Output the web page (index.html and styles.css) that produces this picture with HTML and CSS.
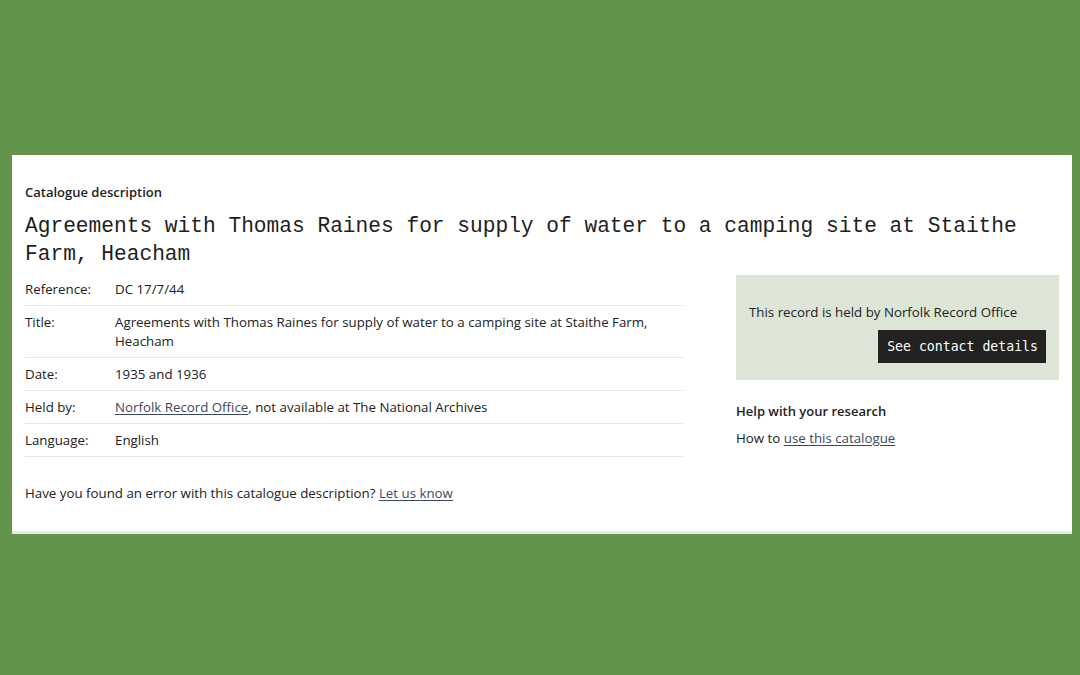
FILE: index.html
```html
<!DOCTYPE html>
<html lang="en">
<head>
<meta charset="utf-8">
<title>Catalogue description</title>
<link rel="stylesheet" href="styles.css">
</head>
<body>
<main class="card">
  <p class="eyebrow">Catalogue description</p>
  <h1 class="title">Agreements with Thomas Raines for supply of water to a camping site at Staithe Farm, Heacham</h1>
  <div class="layout">
    <section class="details">
      <dl class="table">
        <div class="row"><dt>Reference:</dt><dd>DC 17/7/44</dd></div>
        <div class="row"><dt>Title:</dt><dd>Agreements with Thomas Raines for supply of water to a camping site at Staithe Farm, Heacham</dd></div>
        <div class="row"><dt>Date:</dt><dd>1935 and 1936</dd></div>
        <div class="row"><dt>Held by:</dt><dd><a href="#">Norfolk Record Office</a>, not available at The National Archives</dd></div>
        <div class="row"><dt>Language:</dt><dd>English</dd></div>
      </dl>
      <p class="error-note">Have you found an error with this catalogue description? <a href="#">Let us know</a></p>
    </section>
    <aside class="side">
      <div class="held-box">
        <p class="held-text">This record is held by Norfolk Record Office</p>
        <div class="btn-row"><a class="btn" href="#">See contact details</a></div>
      </div>
      <h2 class="help-title">Help with your research</h2>
      <p class="help-text">How to <a href="#">use this catalogue</a></p>
    </aside>
  </div>
</main>
</body>
</html>
```
FILE: styles.css
```css
html, body {
  margin: 0;
  padding: 0;
}
body {
  background: #62944b;
  font-family: "Open Sans", "Noto Sans", sans-serif;
  color: #222;
  font-size: 13.3px;
  line-height: 19px;
  padding-top: 155px;
  height: 675px;
  box-sizing: border-box;
}
.card {
  margin: 0 8px 0 12px;
  background: #fff;
  padding: 27px 13px 28px;
  border-bottom: 3px solid #e4ebe1;
}
.eyebrow {
  margin: 0;
  font-weight: 600;
  font-size: 13px;
  line-height: 20px;
}
.title {
  margin: 10px 0 5px;
  font-family: "Liberation Mono", "DejaVu Sans Mono", monospace;
  font-weight: 400;
  font-size: 21.2px;
  line-height: 28px;
  color: #1e1e1e;
}
.layout {
  display: grid;
  grid-template-columns: 658px 323px;
  column-gap: 53px;
  align-items: start;
}
.table {
  margin: 0;
}
.row {
  display: flex;
  padding: 7px 0 6px;
  border-bottom: 1px solid #e6e6e6;
}
.row dt {
  width: 90px;
  flex: none;
}
.row dd {
  margin: 0;
  flex: 1;
}
a {
  color: #3b4a5e;
  text-decoration: underline;
  text-underline-offset: 2px;
}
.error-note {
  margin: 26px 0 0;
  line-height: 20px;
}
.side {
  padding-top: 2px;
}
.held-box {
  background: #dde5d6;
  padding: 27px 13px 17px;
}
.held-text {
  margin: 0;
  line-height: 20px;
}
.btn-row {
  display: flex;
  justify-content: flex-end;
  margin-top: 8px;
}
.btn {
  background: #222;
  color: #fff;
  text-decoration: none;
  font-family: "DejaVu Sans Mono", "Liberation Mono", monospace;
  font-size: 13.2px;
  line-height: 19px;
  padding: 7px 8px 7px 9px;
}
.help-title {
  margin: 21px 0 0;
  font-size: 13px;
  font-weight: 600;
  line-height: 20px;
}
.help-text {
  margin: 7px 0 0;
  line-height: 20px;
}
```
